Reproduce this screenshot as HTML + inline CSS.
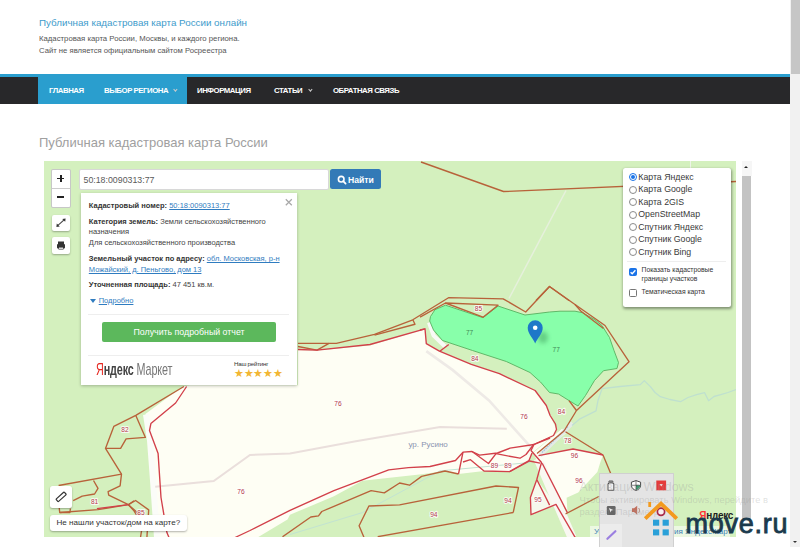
<!DOCTYPE html>
<html><head><meta charset="utf-8">
<style>
*{margin:0;padding:0;box-sizing:border-box}
html,body{width:800px;height:547px;overflow:hidden;background:#fff;font-family:"Liberation Sans",sans-serif}
.a{position:absolute;white-space:nowrap;line-height:1}
#title{left:39px;top:17.7px;font-size:9.8px;color:#3d9bcb;}
#sub1{left:39px;top:34.6px;font-size:7.75px;color:#555;}
#sub2{left:39px;top:47.4px;font-size:7.7px;color:#555;}
#navline{left:0;top:74px;width:790px;height:2.5px;background:#2a9ece}
#nav{left:0;top:76.5px;width:790px;height:27.5px;background:#28282a}
#navact{left:38px;top:76.5px;width:149px;height:27.5px;background:#2a9ece}
.ni{top:86.8px;font-size:7.8px;font-weight:bold;color:#fff;letter-spacing:-0.45px}
.car{top:88.3px;width:2.8px;height:2.8px;border-right:1px solid #ccc;border-bottom:1px solid #ccc;transform:rotate(45deg)}
#h1{left:39px;top:135.5px;font-size:13px;color:#a0a0a0}
#map{left:44px;top:160.5px;width:692px;height:376px;background:#d5ecc2;overflow:hidden}
#map svg{position:absolute;left:0;top:0}
#sb{left:790px;top:0;width:10px;height:547px;background:#f1f1f1}
#sbt{left:791px;top:0;width:9px;height:74px;background:#c6c6c6}
#isb{left:741px;top:160px;width:11px;height:387px;background:#fff}
#isbt{left:742px;top:176px;width:9px;height:343.5px;background:#c3c3c3}
.btn{background:#fff;border:1px solid rgba(0,0,0,0.22);border-radius:2px}
.shadow{box-shadow:0 1px 2px rgba(0,0,0,0.3)}
#zoom{left:51px;top:168.5px;width:20px;height:39px}
#zdiv{left:52px;top:187.5px;width:18px;height:1px;background:#ccc}
#fs{left:51.5px;top:215px;width:18px;height:16px;border:none}
#pr{left:51.5px;top:237px;width:18px;height:16.5px;border:none}
#search{left:79px;top:168.5px;width:249.5px;height:21px;background:#fff;border:1px solid #d8d8d8;border-radius:2px}
#stext{left:83.5px;top:175.6px;font-size:8.8px;color:#5a5a5a}
#sbtn{left:330px;top:168.5px;width:50.8px;height:20.5px;background:#337ab7;border-radius:2.5px}
#sbtext{left:348px;top:175.5px;font-size:8.6px;color:#fff;font-weight:bold}
#popup{left:80.5px;top:192.8px;width:216.5px;height:192px;background:#fff;box-shadow:0 1px 3px rgba(0,0,0,0.25)}
.pt{font-size:7.5px;color:#444}
.pt b{color:#333}
.lnk{color:#2f7cc0;text-decoration:underline}
#gbtn{left:102px;top:321.5px;width:174px;height:20px;background:#5cb85c;border-radius:2px}
#gtext{left:133.5px;top:327.6px;font-size:8.8px;color:#fff}
.sep{height:1px;background:#eee}
#layers{left:622.5px;top:167.5px;width:108px;height:139px;background:#fff;border-radius:2.5px;box-shadow:0.5px 1.5px 3px rgba(0,0,0,0.4)}
.lr{font-size:8.75px;color:#3a3a3a;left:638.3px;margin-top:-0.1px}
.rad{left:628.5px;width:8px;height:8px;border-radius:50%;border:1px solid #8a8a8a;background:#fff}
.lc{font-size:6.8px;color:#333;left:641.5px}
.chk{left:628.5px;width:8px;height:8px;border-radius:1.5px;border:1px solid #767676;background:#fff}
</style></head><body>
<div class="a" id="title">Публичная кадастровая карта России онлайн</div>
<div class="a" id="sub1">Кадастровая карта России, Москвы, и каждого региона.</div>
<div class="a" id="sub2">Сайт не является официальным сайтом Росреестра</div>
<div class="a" id="navline"></div>
<div class="a" id="nav"></div>
<div class="a" id="navact"></div>
<div class="a ni" style="left:49px">ГЛАВНАЯ</div>
<div class="a ni" style="left:104px">ВЫБОР РЕГИОНА</div>
<div class="a car" style="left:173.5px"></div>
<div class="a ni" style="left:197px">ИНФОРМАЦИЯ</div>
<div class="a ni" style="left:274px">СТАТЬИ</div>
<div class="a car" style="left:308.5px"></div>
<div class="a ni" style="left:333px">ОБРАТНАЯ СВЯЗЬ</div>
<div class="a" id="h1">Публичная кадастровая карта России</div>
<div class="a" id="map"><svg width="692" height="376" viewBox="44 160.5 692 376">
<rect x="44" y="160.5" width="692" height="376" fill="#d4f0be"/>
<!-- cream main region -->
<path d="M182.5,386 L145.4,413.5 L146.8,421.8 L150.9,460 L155.2,537 L257.5,537 L287.5,519 L290,514.3 L333.9,495.7 L362.4,480.3 L421.6,473.7 L445,470.5 L458.5,473.5 L484,470.5 L509.5,471.2 L529,460 L532,452.5 L553.5,435 L556.5,429 L550.1,415 L546.3,405 L535.1,390 L499.4,373.2 L471.3,363.8 L439.4,350.6 L426.3,343.1 L425,328.3 L370,345 L317,350 L298,349.6 L298,384.8 L190,384.8 Z" fill="#fefef4"/>
<!-- road strip right + 96 region -->
<path d="M531,450 L541.5,462 L538.5,455.2 L573,448.5 L603,454.5 L600,462.7 L597.4,471.6 L578.2,492.1 L566.6,497.3 L567.5,512.3 L545,470 Z" fill="#fefef4"/>
<path d="M536.8,479 L530.4,496.9 L531,514.2 L556,503.9 Z" fill="#f6f9ec"/>
<path d="M538,458 L556,500 L572,537" stroke="#f9f8f2" stroke-width="9" fill="none"/>
<path d="M564,430.5 L537,453 L541.5,462" fill="none" stroke="#fefef4" stroke-width="6"/>
<!-- white strips -->
<path d="M429,322 L433.5,335 L445,346" stroke="#f9faf6" stroke-width="4" fill="none"/>
<path d="M146,414 L150,440 L153,480 L157,537" stroke="#fbfcf8" stroke-width="6" fill="none"/>
<!-- roads -->
<path d="M155.2,486.3 L213.7,480.5 L250,454.5 L290,452.9 L355.8,440.8 L440,426.6 L506.8,428.2" stroke="#eadfdc" stroke-width="2" fill="none"/>
<path d="M426.3,350.6 L452.5,369.4 L489,400 L532.6,448.6" stroke="#eeeae6" stroke-width="2.6" fill="none"/>
<path d="M566,190 L509,298" stroke="#e6f0dc" stroke-width="1.5" fill="none"/>
<path d="M690.5,160 L690.5,169" stroke="#eef4e8" stroke-width="1" fill="none"/>

<path d="M540,455 L572.5,422.5" stroke="#e4ebe6" stroke-width="4" fill="none"/>
<path d="M542,452 L568,426" stroke="#a6c4dd" stroke-width="1.2" stroke-dasharray="1.5 1" fill="none"/>
<!-- river -->
<path d="M572,425 L580,418.3 L596,410.3 L598,400 L602.1,388.1 L620,386 L640.3,384.1 L644.3,380.1 L650.4,386.1 L655,392 L660.4,396.2 L670,399 L680.5,401.2 L688,397 L696.6,394.2 L704.6,392.2 L708.6,400.2 L714,396 L720.7,394.2 L728,392 L736,389" stroke="#bfe0cf" stroke-width="1.3" fill="none" stroke-linejoin="round"/>
<path d="M290,534 L362.4,512.1 L440,470.4 L530,462" stroke="#c2e3d2" stroke-width="1" fill="none"/>
<!-- highlighted parcel -->
<path d="M430.5,316 L435,309.2 L445.5,304.7 L483,317.2 L498,305.5 L525,314.5 L549.5,311.5 L560,310.7 L575,310.7 L582.5,312.2 L594.5,319 L602,325 L609.5,337 L614,350 L618.5,362 L617,368 L603.5,370.2 L594.5,380 L585.5,395 L578,405.5 L570.5,401 L558.5,393.5 L549.5,392 L540.5,381.5 L530,372 L506.3,361 L472.5,350 L442.5,340 L433.5,329.5 L429.7,320.5 Z" fill="#88ffaa" stroke="#58b060" stroke-width="0.9"/>
<!-- pin shadow -->
<defs><filter id="bl" x="-1" y="-1" width="3" height="3"><feGaussianBlur stdDeviation="2"/></filter></defs><ellipse cx="543" cy="337" rx="5" ry="6" fill="#3a9a5a" opacity="0.45" filter="url(#bl)"/>
<g fill="none" stroke-linejoin="round" stroke-width="1.35">
<g stroke="#b8623a">
<path d="M421,161.5 L503.5,191 L736,181"/>
<path d="M298,342.9 L336.3,342.9 L374.5,333.9 L412.8,319.3 L448.5,297.2 L503.2,298.3 L525.7,311.5 L549.5,286 L575,304 L605,325 L629,361.2 L576.5,410 L564,430.5 L537,453"/>
<path d="M374.5,334.6 L415,323.75 L412.8,319.3"/>
<path d="M420,316.7 L445.5,302.5 L498,304.7 L483,316.7 L445.5,302.5"/>
<path d="M575,304 L581,310.7 L603.5,328"/>
<path d="M298,346 L317,349.6 L329,342.9"/>
<path d="M536,300 L549.5,286 L569,300"/>
<path d="M569,400.2 L576.5,410"/>
<path d="M565.5,431.2 L603,454.5 L610.5,472.5 L614,490"/>
<path d="M282.5,536.3 L310.8,516.5 L318.5,515.4 L321.8,511 L371.1,490.2 L384.3,492.4 L399.6,482.5 L409.5,484.7 L421.6,475.9 L445,470.5 L458.5,473.5"/>
<path d="M364.6,538.4 L359.1,525.3 L368.9,505.5 L399.6,504.4 L496,485.5 L518.5,487 L513.2,512 M377.7,536.2 L513.2,512"/>
<path d="M183.9,386 L135.8,414.9 L113.8,425.9 L105.5,447.9 L121.5,473.6 L120.1,485.3 L108.1,491.2 L108.7,494.6 L128.4,504.2 L143.5,517.5 L140.5,537"/>
<path d="M135.8,414.9 L145.4,436.9 L126.1,438.3 L120.6,447.9 L105.5,447.9"/>
<path d="M58.6,485 L121.5,473.6"/>
<path d="M93.5,480 L98,487.9 L94.6,493.5 L82.2,495.7 L73.2,500.2"/>
<path d="M59.2,507 L59.7,512 L69.9,512 L70.4,508"/>
<path d="M59.7,512 L98,509.2 L128.4,504.2 L134,500.2"/>
<path d="M128.4,504.2 L135.6,500 L148.7,509.4 L146.9,537"/>
<path d="M128.4,504.2 L134,510.4 L140,520"/>
<path d="M598.7,496 L565.5,513.5"/>
</g>
<g stroke="#d2404a">
<path d="M298,349 L317,349.6 L370,344 L425,328.3 L426.3,343.1 L439.4,350.6 L471.3,363.8 L499.4,373.2 L535.1,390 L546.3,405 L550.1,415 L555.5,423.5 L556.5,429 L553.5,435 L534,444 L510,447.7 L497.5,452.5 L479.5,454.7 L472,451 L463,451.7 L455.5,460 L430,466 L408.4,467.1 L388.7,469.3 L333.9,490.2 L290,509.9 L250,530 L235,537"/>
<path d="M439.8,350.8 L448.8,344"/>
<path d="M425,328.3 L420,329.5"/>
<path d="M463,451.7 L458.5,473.5 M463,461.5 L470.5,459.2 L484,470.5 L509.5,471.2 L529,460 L532,452.5"/>
<path d="M472,451 L488.5,463 L496,453.2 L520,457.7 L526,454 L533.5,444.2 L550,437.5"/>
<path d="M534,444 L531,450 L541.5,462 L536.8,479 L530.4,496.9 L531,514.2 L556,503.9 L575.2,537 M542.2,462.7 L567.5,512.3 M536.8,479 L549.6,504.6"/>
<path d="M538.5,455.2 L573,448.5 L603,454.5"/>
<path d="M510,471 L529.5,460.5 L540,462.7"/>
<path d="M186.6,386 L175.6,402.5 L150.9,423.1 L149.5,430 L158.1,453.1 L161,497 L166.9,532.1 L169,537"/>
<path d="M96.9,508.1 L128.4,504.2"/>
</g>
</g>
<!-- labels -->
<g font-family="Liberation Sans" font-size="6.6" fill="#b53a4c" text-anchor="middle" stroke="#fff" stroke-width="2" paint-order="stroke" stroke-opacity="0.8">
<text x="478.5" y="310.6">85</text>
<text x="474.8" y="360">84</text>
<text x="561.5" y="413.5">84</text>
<text x="567.7" y="442.3">78</text>
<text x="574.5" y="457.3">96</text>
<text x="579" y="482">96</text>
<text x="338" y="405">76</text>
<text x="524" y="418">76</text>
<text x="241" y="493.5">76</text>
<text x="433.8" y="516">94</text>
<text x="508" y="502.5">94</text>
<text x="538" y="501.5">95</text>
<text x="94.6" y="503">81</text>
<text x="141" y="514.5">85</text>
<text x="125" y="431">82</text>
<text x="494.5" y="467.3">89</text>
<text x="508" y="467.3">89</text>
</g>
<g font-family="Liberation Sans" font-size="6.5" fill="#3f8a55" text-anchor="middle">
<text x="469.5" y="334">77</text>
<text x="556.2" y="351.6">77</text>
</g>
<text x="408.4" y="446.3" font-family="Liberation Sans" font-size="8" fill="#8a93b0">ур. Русино</text>
<!-- pin -->
<path d="M535.2,343 C533.2,337.5 527.7,333.5 527.7,327.2 A7.5,7.5 0 1 1 542.7,327.2 C542.7,333.5 537.2,337.5 535.2,343 Z" fill="#1e78c8"/>
<circle cx="535.2" cy="327.2" r="2.3" fill="#fff"/>
</svg></div>

<!-- map controls -->
<div class="a btn" id="zoom"></div>
<div class="a" id="zdiv"></div>
<div class="a" style="left:57px;top:174.8px;width:7.4px;height:7.4px">
  <div class="a" style="left:0;top:2.8px;width:7.4px;height:1.9px;background:#222"></div>
  <div class="a" style="left:2.75px;top:0;width:1.9px;height:7.4px;background:#222"></div>
</div>
<div class="a" style="left:57px;top:195.8px;width:7.4px;height:1.9px;background:#222"></div>
<div class="a btn shadow" id="fs"></div>
<svg class="a" style="left:51.5px;top:215px" width="18" height="16" viewBox="0 0 18 16"><path d="M6.2 10.2 L11.8 5.2" stroke="#444" stroke-width="1.1"/><path d="M4.4 12 L4.8 8.6 L7.8 11.4 Z M13.6 3.4 L13.2 6.8 L10.2 4 Z" fill="#333"/></svg>
<div class="a btn shadow" id="pr"></div>
<svg class="a" style="left:51.5px;top:237px" width="18" height="17" viewBox="0 0 18 17"><rect x="6" y="4.5" width="6" height="2.5" fill="#333"/><rect x="5" y="7" width="8" height="4.5" rx="1" fill="#333"/><rect x="6.5" y="10" width="5" height="2.5" fill="#333"/><rect x="7" y="10.6" width="4" height="1.2" fill="#fff"/></svg>

<div class="a" id="search"></div>
<div class="a" id="stext">50:18:0090313:77</div>
<div class="a" id="sbtn"></div>
<svg class="a" style="left:337px;top:174.5px" width="10" height="10" viewBox="0 0 10 10"><circle cx="4.2" cy="4.2" r="2.8" stroke="#fff" stroke-width="1.6" fill="none"/><path d="M6.2 6.2 L8.6 8.6" stroke="#fff" stroke-width="1.8" stroke-linecap="round"/></svg>
<div class="a" id="sbtext">Найти</div>

<!-- popup -->
<div class="a" id="popup"></div>
<svg class="a" style="left:284px;top:197px" width="10" height="10" viewBox="0 0 10 10"><path d="M1.8 2.2 L7.8 8.2 M7.8 2.2 L1.8 8.2" stroke="#a8a8a8" stroke-width="1.25"/></svg>
<div class="a pt" style="left:88.8px;top:202.2px"><b>Кадастровый номер:</b> <span class="lnk">50:18:0090313:77</span></div>
<div class="a pt" style="left:88.8px;top:217.9px"><b>Категория земель:</b> Земли сельскохозяйственного</div>
<div class="a pt" style="left:88.8px;top:228.4px">назначения</div>
<div class="a pt" style="left:88.8px;top:238.9px">Для сельскохозяйственного производства</div>
<div class="a pt" style="left:88.8px;top:255.2px"><b>Земельный участок по адресу:</b> <span class="lnk">обл. Московская, р-н</span></div>
<div class="a pt" style="left:88.8px;top:265.7px"><span class="lnk">Можайский, д. Пеньгово, дом 13</span></div>
<div class="a pt" style="left:88.8px;top:281.4px"><b>Уточненная площадь:</b> 47 451 кв.м.</div>
<div class="a" style="left:89.6px;top:298.5px;width:0;height:0;border-left:3px solid transparent;border-right:3px solid transparent;border-top:4px solid #2f7cc0"></div>
<div class="a pt lnk" style="left:98.7px;top:296.7px">Подробно</div>
<div class="a sep" style="left:88px;top:314px;width:201px"></div>
<div class="a" id="gbtn"></div>
<div class="a" id="gtext">Получить подробный отчет</div>
<div class="a sep" style="left:88px;top:355px;width:201px"></div>
<div class="a" id="ym" style="left:96px;top:360.5px;font-size:17px;transform:scaleX(0.635);transform-origin:0 0;letter-spacing:-0.2px"><span style="color:#e5261f">Я</span><span style="color:#444;font-weight:bold">ндекс</span> <span style="color:#777">Маркет</span></div>
<div class="a" style="left:234px;top:360.5px;font-size:6.2px;color:#333;letter-spacing:-0.25px">Наш рейтинг</div>
<div class="a" style="left:233.8px;top:368px;font-size:10.8px;color:#f2b633;letter-spacing:-0.25px">★★★★★</div>

<!-- layers -->
<div class="a" id="layers"></div>
<div class="a rad" style="top:173px;border-color:#1a73e8;background:#fff"></div>
<div class="a" style="left:630.5px;top:175px;width:4px;height:4px;border-radius:50%;background:#1a73e8"></div>
<div class="a lr" style="top:173px">Карта Яндекс</div>
<div class="a rad" style="top:185.5px"></div><div class="a lr" style="top:185.5px">Карта Google</div>
<div class="a rad" style="top:198px"></div><div class="a lr" style="top:198px">Карта 2GIS</div>
<div class="a rad" style="top:210.5px"></div><div class="a lr" style="top:210.5px">OpenStreetMap</div>
<div class="a rad" style="top:223px"></div><div class="a lr" style="top:223px">Спутник Яндекс</div>
<div class="a rad" style="top:235.5px"></div><div class="a lr" style="top:235.5px">Спутник Google</div>
<div class="a rad" style="top:248px"></div><div class="a lr" style="top:248px">Спутник Bing</div>
<div class="a sep" style="left:627px;top:260.5px;width:99px"></div>
<div class="a chk" style="top:268px;background:#1a73e8;border-color:#1a73e8"></div>
<svg class="a" style="left:628.5px;top:268px" width="8" height="8" viewBox="0 0 8 8"><path d="M1.6 4.2 L3.2 5.8 L6.4 2.2" stroke="#fff" stroke-width="1.3" fill="none"/></svg>
<div class="a lc" style="top:267px">Показать кадастровые</div>
<div class="a lc" style="top:275.5px">границы участков</div>
<div class="a chk" style="top:288.5px"></div>
<div class="a lc" style="top:288.5px">Тематическая карта</div>


<!-- ruler & not found -->
<div class="a" style="left:50.2px;top:486.2px;width:22px;height:21.4px;background:#fff;border-radius:2.5px;box-shadow:0 1px 2px rgba(0,0,0,0.3)"></div>
<svg class="a" style="left:50.2px;top:486.2px" width="22" height="22" viewBox="0 0 22 22"><g transform="rotate(-42 11 10.7)"><rect x="5.5" y="9.2" width="11" height="3.4" rx="0.6" fill="none" stroke="#333" stroke-width="1.2"/></g></svg>
<div class="a" style="left:50.2px;top:514.9px;width:137px;height:15.7px;background:#fff;border-radius:3px;box-shadow:0 1px 2px rgba(0,0,0,0.3)"></div>
<div class="a" id="nf" style="left:56.5px;top:518.6px;font-size:8.1px;color:#333">Не нашли участок/дом на карте?</div>

<div class="a" id="isb"></div>
<div class="a" id="isbt"></div>
<div class="a" style="left:741.5px;top:160.5px;width:10px;height:15px;background:#f6f6f6"></div>
<div class="a" style="left:744.4px;top:166.2px;width:0;height:0;border-left:2.1px solid transparent;border-right:2.1px solid transparent;border-bottom:2.3px solid #222"></div>
<div class="a" id="sb"></div>
<div class="a" id="sbt"></div>
<div class="a" style="left:793.4px;top:540.8px;width:0;height:0;border-left:2.1px solid transparent;border-right:2.1px solid transparent;border-top:2.3px solid #333"></div>
<div class="a" style="left:590px;top:526px;width:140px;height:10.5px;background:rgba(255,255,255,0.55)"></div>
<div class="a" style="left:594px;top:528.2px;font-size:8px;color:#3b7fb8">Условия использования Яндекс.Карт</div>
<!-- windows tray -->
<div class="a" style="left:598.5px;top:473px;width:75px;height:80px;background:#e4e4e4;border:1px solid #d0d0d0"></div>
<div class="a" style="left:599.5px;top:523.5px;width:22.5px;height:30px;background:#ececec"></div>
<svg class="a" style="left:598px;top:471px" width="80" height="76" viewBox="598 471 80 76">
 <path d="M609,481 h3.8 v2.5 h1 v6.8 h-5.8 v-6.8 h1 z" fill="#f2f2f2" stroke="#333" stroke-width="0.8"/>
 <rect x="609.2" y="481.2" width="3.4" height="2.3" fill="#777"/>
 <path d="M636,480.6 l4.6,1.6 v3.2 c0,2.6 -2.2,4.3 -4.6,5 c-2.4,-0.7 -4.6,-2.4 -4.6,-5 v-3.2 z" fill="#fff" stroke="#333" stroke-width="0.9"/>
 <path d="M636,485.3 h4.4 c-0.2,2.2 -2.1,3.8 -4.4,4.6 z" fill="#2f9a6a"/>
 <path d="M636,480.8 v9.4 M631.6,485.3 h8.8" stroke="#333" stroke-width="0.6"/>
 <rect x="656.3" y="480.5" width="9.8" height="9.8" fill="#e53a3a"/>
 <path d="M659.5,484 h3.4 l-1.7,2.6 z" fill="#fff" opacity="0.85"/>
 <rect x="606.8" y="506" width="8.8" height="9" rx="1.2" fill="#666"/>
 <path d="M608.8,508 l4.5,2 l-2,0.6 l-0.6,2 z" fill="#eee"/>
 <path d="M632,508.3 h2 l3.2,-2.6 v9 l-3.2,-2.6 h-2 z" fill="#c0705e"/>
 <path d="M638.6,508 c1.2,1.2 1.2,3.6 0,4.8" stroke="#b07060" stroke-width="0.8" fill="none"/>
 <path d="M607.4,538.8 L615.4,531.2" stroke="#9b7fe0" stroke-width="2.2" stroke-linecap="round"/>
</svg>
<!-- watermark -->
<div class="a" style="left:579.5px;top:481px;font-size:12.4px;color:rgba(150,150,150,0.3)">Активация Windows</div>
<div class="a" style="left:579.5px;top:495px;font-size:9.4px;color:rgba(150,150,150,0.3)">Чтобы активировать Windows, перейдите в</div>
<div class="a" style="left:579.5px;top:507.4px;font-size:9.4px;color:rgba(150,150,150,0.3)">раздел "Параметры".</div>
<!-- yandex logo -->
<div class="a" style="left:699.3px;top:510.5px;font-size:10px;font-weight:bold;letter-spacing:-0.3px"><span style="color:#f33">Я</span><span style="color:#222">ндекс</span></div>
<!-- move.ru logo -->
<svg class="a" style="left:640px;top:497px" width="40" height="42" viewBox="640 497 40 42">
 <rect x="648.3" y="502" width="2.8" height="5" fill="#f39a1e"/>
 <circle cx="661" cy="511.8" r="3.6" fill="#f8f0f0" stroke="#a82a48" stroke-width="1.7"/>
 <path d="M645.2,518.6 L661,503.6 L676.8,518.6" stroke="#f39a1e" stroke-width="3.8" fill="none" stroke-linejoin="miter"/>
 <rect x="653" y="519.7" width="6.2" height="6" fill="#2aa0d8"/>
 <rect x="662.6" y="519.7" width="6.2" height="6" fill="#2aa0d8"/>
 <rect x="653" y="529.4" width="6.2" height="6" fill="#2aa0d8"/>
 <rect x="662.6" y="529.4" width="6.2" height="6" fill="#2aa0d8"/>
</svg>
<div class="a" id="mv" style="left:685.5px;top:511.3px;font-size:27px;color:#1b3a4d;letter-spacing:0.75px;-webkit-text-stroke:0.85px #1b3a4d">move.ru</div>
</body></html>
